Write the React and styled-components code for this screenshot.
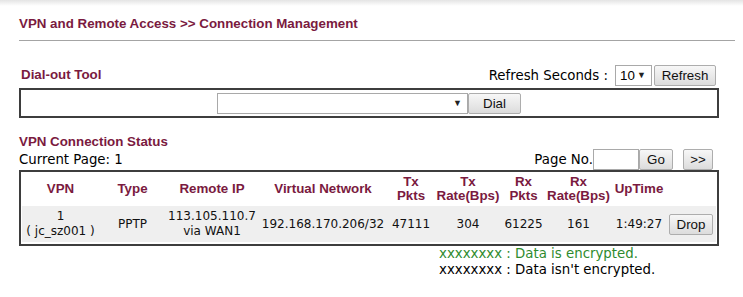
import styled, { createGlobalStyle } from "styled-components";

const GlobalStyle = createGlobalStyle`
  html, body {
    margin: 0;
    padding: 0;
  }
  body {
    background: linear-gradient(#e4e4e4, #fff 6px) no-repeat #fff;
    font-family: "DejaVu Sans", Verdana, sans-serif;
    font-size: 10pt;
    color: #000;
  }
`;

const maroon = "#7a1a40";

const Page = styled.div`
  padding: 16px 0 0 19px;
`;

const Title = styled.h1`
  margin: 0;
  width: 716px;
  padding-bottom: 8px;
  border-bottom: 1px solid #a4a4a4;
  font: bold 10pt/16px "Liberation Sans", Arial, sans-serif;
  color: ${maroon};
`;

const ToolRow = styled.div`
  width: 700px;
  height: 22px;
  margin-top: 23px;
  padding: 0 3px 0 2px;
  box-sizing: border-box;
  display: flex;
  align-items: center;
  justify-content: space-between;
`;

const Label = styled.span`
  font: bold 10pt/16px "Liberation Sans", Arial, sans-serif;
  color: ${maroon};
`;

const Group = styled.div`
  display: flex;
  align-items: center;
`;

const Text = styled.span`
  margin-right: ${(p) => p.$gap || 0}px;
  white-space: nowrap;
`;

const FakeSelect = styled.div`
  width: ${(p) => p.$w}px;
  height: 21px;
  box-sizing: border-box;
  border: 1px solid #a9a9a9;
  background: #fff;
  display: flex;
  align-items: center;
  padding: 0 5px 0 4px;
  font: 10pt "Liberation Sans", Arial, sans-serif;

  &::after {
    content: "▼";
    margin-left: auto;
    font-size: 9px;
    color: #222;
  }
`;

const Button = styled.button`
  height: 21px;
  width: ${(p) => p.$w}px;
  margin-left: ${(p) => p.$ml || 0}px;
  padding: 0;
  box-sizing: border-box;
  border: 1px solid #adadad;
  border-radius: 2px;
  background: linear-gradient(#f7f7f7, #dcdcdc);
  font: 10pt "Liberation Sans", Arial, sans-serif;
  color: #111;
`;

const DialBox = styled.div`
  width: 700px;
  height: 30px;
  margin-top: 2px;
  box-sizing: border-box;
  border: 2px solid #3d3d3d;
  display: flex;
  align-items: center;
  justify-content: center;
`;

const SectionTitle = styled(Label)`
  display: block;
  margin-top: 16px;
  line-height: 15px;
`;

const PageRow = styled.div`
  width: 700px;
  height: 21px;
  padding-right: 6px;
  box-sizing: border-box;
  display: flex;
  align-items: center;
  justify-content: space-between;
`;

const PageInput = styled.div`
  width: 46px;
  height: 21px;
  box-sizing: border-box;
  border: 1px solid #a9a9a9;
  background: #fff;
`;

const Table = styled.table`
  width: 700px;
  box-sizing: border-box;
  table-layout: fixed;
  border-collapse: separate;
  border-spacing: 0;
  border: 2px solid #3d3d3d;
  padding: 0 1px 2px;
`;

const HeadCell = styled.th`
  height: 34px;
  padding: 0;
  text-align: center;
  vertical-align: middle;
  font: bold 10pt/14px "Liberation Sans", Arial, sans-serif;
  color: ${maroon};
`;

const Cell = styled.td`
  height: 36px;
  padding: 0;
  background: #efefef;
  text-align: center;
  vertical-align: middle;
  font-size: 12px;
  line-height: 15px;
  white-space: nowrap;
  color: #111;
`;

const Legend = styled.div`
  margin-left: 420px;
  line-height: 16px;
  color: ${(p) => (p.$ok ? "#2e8b2e" : "#000")};
`;

const cols = [77, 67, 92, 130, 46, 68, 43, 67, 54, 50];

const headers = [
  ["VPN"],
  ["Type"],
  ["Remote IP"],
  ["Virtual Network"],
  ["Tx", "Pkts"],
  ["Tx", "Rate(Bps)"],
  ["Rx", "Pkts"],
  ["Rx", "Rate(Bps)"],
  ["UpTime"],
  [],
];

export default function App() {
  return (
    <Page>
      <GlobalStyle />
      <Title>VPN and Remote Access &gt;&gt; Connection Management</Title>

      <ToolRow>
        <Label>Dial-out Tool</Label>
        <Group>
          <Text $gap={7}>Refresh Seconds :</Text>
          <FakeSelect $w={37}>10</FakeSelect>
          <Button $w={62} $ml={2}>Refresh</Button>
        </Group>
      </ToolRow>

      <DialBox>
        <FakeSelect $w={251} />
        <Button $w={53}>Dial</Button>
      </DialBox>

      <SectionTitle>VPN Connection Status</SectionTitle>
      <PageRow>
        <Text>Current Page: 1</Text>
        <Group>
          <Text>Page No.</Text>
          <PageInput />
          <Button $w={34}>Go</Button>
          <Button $w={30} $ml={10}>&gt;&gt;</Button>
        </Group>
      </PageRow>

      <Table>
        <colgroup>
          {cols.map((w, i) => (
            <col key={i} style={{ width: w }} />
          ))}
        </colgroup>
        <thead>
          <tr>
            {headers.map((lines, i) => (
              <HeadCell key={i}>
                {lines.map((l, j) => (
                  <div key={j}>{l}</div>
                ))}
              </HeadCell>
            ))}
          </tr>
        </thead>
        <tbody>
          <tr>
            <Cell>
              1<br />( jc_sz001 )
            </Cell>
            <Cell>PPTP</Cell>
            <Cell>
              113.105.110.7
              <br />
              via WAN1
            </Cell>
            <Cell>192.168.170.206/32</Cell>
            <Cell>47111</Cell>
            <Cell>304</Cell>
            <Cell>61225</Cell>
            <Cell>161</Cell>
            <Cell>1:49:27</Cell>
            <Cell>
              <Button $w={44}>Drop</Button>
            </Cell>
          </tr>
        </tbody>
      </Table>

      <Legend $ok>xxxxxxxx : Data is encrypted.</Legend>
      <Legend>xxxxxxxx : Data isn't encrypted.</Legend>
    </Page>
  );
}
